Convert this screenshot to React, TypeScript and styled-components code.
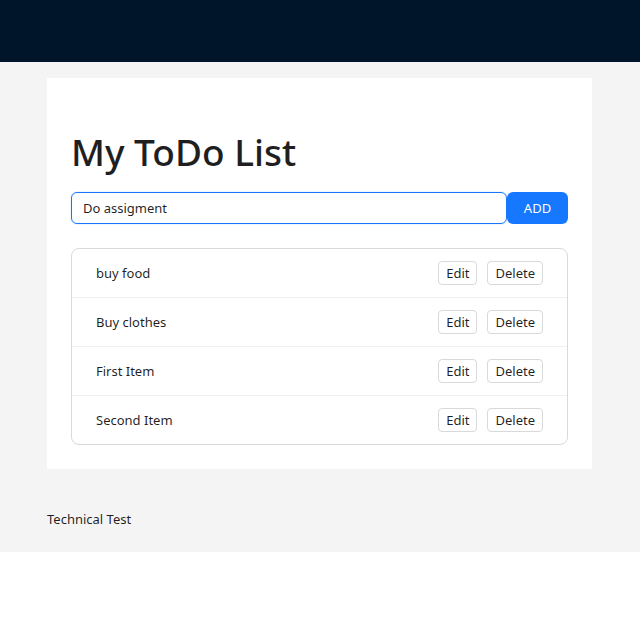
import React, { useState } from 'react';
import styled, { createGlobalStyle } from 'styled-components';

const GlobalStyle = createGlobalStyle`
  html, body {
    margin: 0;
    padding: 0;
    background: #ffffff;
  }
  body {
    font-family: 'Segoe UI', 'Noto Sans', sans-serif;
    font-size: 13px;
    color: rgba(0, 0, 0, 0.88);
  }
  * {
    box-sizing: border-box;
  }
`;

const Header = styled.header`
  height: 62px;
  background: #001529;
`;

const Main = styled.main`
  background: #f4f4f4;
  padding: 16px 48px 0 47px;
`;

const Card = styled.section`
  background: #ffffff;
  padding: 24px;
`;

const Title = styled.h1`
  margin: 26px 0 16px;
  font-size: 37px;
  font-weight: 500;
  line-height: 48px;
  color: #1f1f1f;
`;

const Form = styled.form`
  display: flex;
  align-items: stretch;
  margin-bottom: 24px;
`;

const TextInput = styled.input`
  flex: 1;
  height: 32px;
  padding: 0 11px;
  border: 1px solid #1677ff;
  border-radius: 6px;
  font: inherit;
  font-size: 13px;
  color: rgba(0, 0, 0, 0.88);
  outline: none;
  box-shadow: 0 0 0 1px rgba(5, 145, 255, 0.08);
`;

const AddButton = styled.button`
  width: 61px;
  height: 32px;
  border: none;
  border-radius: 6px;
  background: #1677ff;
  color: #ffffff;
  font: inherit;
  font-size: 13px;
  cursor: pointer;
`;

const List = styled.ul`
  list-style: none;
  margin: 0;
  padding: 0;
  border: 1px solid #d9d9d9;
  border-radius: 8px;
`;

const Row = styled.li<{ last?: boolean }>`
  display: flex;
  align-items: center;
  justify-content: space-between;
  height: ${({ last }) => (last ? '48px' : '49px')};
  padding: 0 24px;
  border-bottom: ${({ last }) => (last ? 'none' : '1px solid #f0f0f0')};
`;

const ItemText = styled.span`
  font-size: 13px;
`;

const Actions = styled.div`
  display: flex;
  gap: 10px;
`;

const SmallButton = styled.button`
  height: 24px;
  padding: 0 7px;
  border: 1px solid #d9d9d9;
  border-radius: 4px;
  background: #ffffff;
  font: inherit;
  font-size: 13px;
  color: rgba(0, 0, 0, 0.88);
  cursor: pointer;
`;

const Footer = styled.footer`
  background: #f4f4f4;
  padding: 39px 47px 22px;
  line-height: 22px;
  font-size: 13px;
`;

const items = ['buy food', 'Buy clothes', 'First Item', 'Second Item'];

export default function App() {
  const [value, setValue] = useState('Do assigment');

  return (
    <>
      <GlobalStyle />
      <Header />
      <Main>
        <Card>
          <Title>My ToDo List</Title>
          <Form onSubmit={e => e.preventDefault()}>
            <TextInput value={value} onChange={e => setValue(e.target.value)} />
            <AddButton type="submit">ADD</AddButton>
          </Form>
          <List>
            {items.map((item, i) => (
              <Row key={item} last={i === items.length - 1}>
                <ItemText>{item}</ItemText>
                <Actions>
                  <SmallButton type="button">Edit</SmallButton>
                  <SmallButton type="button">Delete</SmallButton>
                </Actions>
              </Row>
            ))}
          </List>
        </Card>
      </Main>
      <Footer>Technical Test</Footer>
    </>
  );
}
